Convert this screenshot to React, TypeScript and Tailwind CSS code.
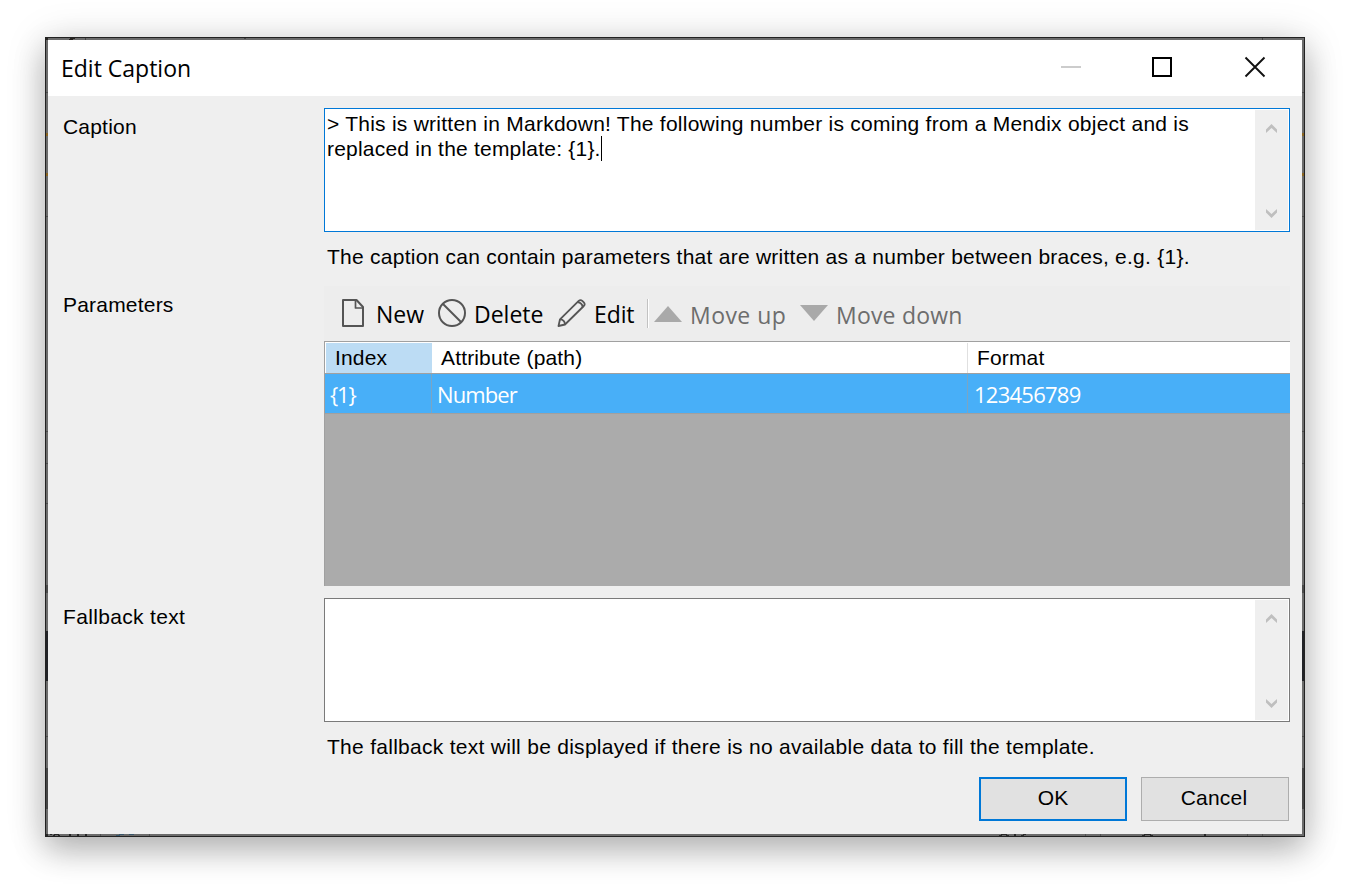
import type { ReactNode } from "react";

const ui = "font-['Open_Sans','Noto_Sans',sans-serif]";

function TopStrip() {
  return (
    <svg className="block h-[2px] w-full" viewBox="0 0 1258 2" shapeRendering="crispEdges">
      <rect width="1258" height="2" fill="#6b6b6b" />
      <path d="M0 0h2v2h-2zM24 0h5v1h-5zM23 1h4v1h-4z" fill="#25221f" />
      <path d="M39 0h1v2h-1zM198 0h2v1h-2zM1216 0h1v2h-1z" fill="#444" />
    </svg>
  );
}

function BottomStrip() {
  return (
    <svg className="block h-[2px] w-full" viewBox="0 0 1258 2" shapeRendering="crispEdges">
      <rect width="1258" height="2" fill="#6b6b6b" />
      <path d="M0 0h2v2h-2zM4 0h2v1h-2zM8 0h5v1h-5zM7 1h2v1h-2zM12 1h2v1h-2zM23 0h2v2h-2zM31 0h2v2h-2zM39 0h2v2h-2z" fill="#272727" />
      <path d="M73 0h5v1h-5zM83 0h5v1h-5zM70 1h4v1h-4z" fill="#38566b" />
      <path d="M54 0h1v2h-1zM103 0h1v2h-1zM1039 0h1v2h-1zM1054 0h1v2h-1zM1201 0h1v2h-1zM1216 0h1v2h-1z" fill="#505050" />
      <path d="M955 0h6v1h-6zM953 1h3v1h-3zM960 1h3v1h-3zM968 0h2v2h-2zM977 0h3v1h-3zM975 1h3v1h-3zM1098 0h7v1h-7zM1096 1h3v1h-3zM1104 1h3v1h-3zM1158 0h2v2h-2z" fill="#2a2a2a" />
    </svg>
  );
}

function SideStrip() {
  return (
    <svg className="block h-[794px] w-[2px] shrink-0" viewBox="0 0 2 794" shapeRendering="crispEdges">
      <rect width="2" height="794" fill="#6b6b6b" />
      <path d="M0 52h2v1h-2zM0 176h2v1h-2zM0 391h2v1h-2zM0 423h2v1h-2zM0 463h2v1h-2zM0 696h2v1h-2z" fill="#4d4d4d" />
      <path d="M0 93h2v3h-2zM0 133h2v3h-2z" fill="#8a6420" />
      <rect y="545" width="2" height="8" fill="#4a4a4a" />
      <rect y="591" width="2" height="50" fill="#222327" />
      <rect y="728" width="2" height="41" fill="#454545" />
    </svg>
  );
}

function Chevron({ down = false }: { down?: boolean }) {
  return (
    <svg className="block h-[9px] w-[11px]" viewBox="0 0 11 9">
      <path
        d={down ? "M0 0L5.5 5L11 0V3.6L5.5 9L0 3.6Z" : "M0 9L5.5 4L11 9V5.4L5.5 0L0 5.4Z"}
        fill="#bfbfbf"
      />
    </svg>
  );
}

function TextBox({ focused = false, children }: { focused?: boolean; children?: ReactNode }) {
  return (
    <div className={`flex h-[124px] w-[966px] border bg-white ${focused ? "border-[#0078d7]" : "border-[#7a7a7a]"}`}>
      <div className="grow pt-[2px] pl-[2px] leading-[25px] whitespace-nowrap">{children}</div>
      <div className="my-px mr-px flex w-[33px] flex-col items-center justify-between bg-[#efefef] pt-[14px] pb-[12px]">
        <Chevron />
        <Chevron down />
      </div>
    </div>
  );
}

export default function App() {
  return (
    <div className="h-[890px] w-[1350px] overflow-hidden bg-white pt-[37px] pl-[45px] font-['Liberation_Sans',Arial,sans-serif] text-[21px] text-black">
      <div className="h-[800px] w-[1260px] border border-[#222222] shadow-[0_14px_30px_rgba(0,0,0,0.23),0_3px_38px_rgba(0,0,0,0.15)]">
        <TopStrip />
        <div className="flex">
          <SideStrip />
          <div className="h-[794px] w-[1254px] bg-[#efefef]">
            <header className="flex h-[56px] items-start bg-white">
              <h1 className={`${ui} grow pt-[11px] pl-[13px] text-[23px] leading-[34px]`}>Edit Caption</h1>
              <svg className="h-[56px] w-[260px]" viewBox="0 0 260 56">
                <path d="M19 27h20" stroke="#cccccc" strokeWidth="2" />
                <rect x="111" y="18" width="18" height="18" fill="none" stroke="#000" strokeWidth="2" />
                <path d="M203.5 17.5l19 19M222.5 17.5l-19 19" stroke="#111" strokeWidth="1.9" />
              </svg>
            </header>

            <main className="pt-[12px]">
              <section className="flex h-[178px]">
                <div className="w-[276px] shrink-0 pt-[6px] pl-[15px] leading-[25px] tracking-[0.2px]">Caption</div>
                <div>
                  <TextBox focused>
                    <div className="tracking-[0.245px]">&gt; This is written in Markdown! The following number is coming from a Mendix object and is</div>
                    <div className="flex tracking-[0.21px]">
                      replaced in the template: {"{1}."}
                      <span className="h-[25px] w-px bg-black" />
                    </div>
                  </TextBox>
                  <p className="pt-[12px] pl-[3px] leading-[25px] tracking-[0.25px]">
                    The caption can contain parameters that are written as a number between braces, e.g. {"{1}."}
                  </p>
                </div>
              </section>

              <section className="flex h-[312px]">
                <div className="w-[276px] shrink-0 pt-[6px] pl-[15px] leading-[25px] tracking-[0.2px]">Parameters</div>
                <div className="w-[966px]">
                  <div className={`${ui} flex h-[55px] items-center bg-[#ededed] pl-[16px] text-[23px] leading-[34px] whitespace-nowrap`}>
                    <svg className="h-[30px] w-[24px] shrink-0" viewBox="0 0 24 30" fill="none" stroke="#555" strokeWidth="2" strokeLinejoin="round">
                      <path d="M3 1h13.5L23 8v19H3z" />
                      <path d="M15.5 1v8h7.5" strokeWidth="1.7" />
                    </svg>
                    <span className="ml-[12px] w-[62px] pt-px">New</span>
                    <svg className="h-[30px] w-[28px] shrink-0" viewBox="0 0 28 30" fill="none" stroke="#555" strokeWidth="2">
                      <circle cx="14" cy="14" r="13" />
                      <path d="M5 5l18 18" />
                    </svg>
                    <span className="ml-[8px] w-[83px] pt-px">Delete</span>
                    <svg className="h-[30px] w-[30px] shrink-0" viewBox="0 0 30 30" fill="none" stroke="#555" strokeWidth="1.8" strokeLinejoin="round">
                      <path d="M1.5 27L3 20.3L21.7 1.9Q23.5 .3 25.3 1.9L26.8 3.4Q28.5 5.2 26.8 7L8 25.5L1.5 27Z" />
                      <path d="M3 20.3Q7.8 20.5 8 25.5M20.5 3.2Q25 3.7 25.7 8" />
                    </svg>
                    <span className="ml-[7px] w-[53px] pt-px tracking-[-0.1px]">Edit</span>
                    <span className="h-[29px] w-px bg-[#c2c2c2]" />
                    <span className="h-[29px] w-px bg-white" />
                    <svg className="ml-[5px] h-[16px] w-[28px] shrink-0" viewBox="0 0 28 16"><path d="M0 16L14 0L28 16Z" fill="#a9a9a9" /></svg>
                    <span className="ml-[8px] w-[110px] pt-[2px] tracking-[0.45px] text-[#6d6d6d]">Move up</span>
                    <svg className="h-[16px] w-[28px] shrink-0 -translate-y-px" viewBox="0 0 28 16"><path d="M0 0H28L14 16Z" fill="#a9a9a9" /></svg>
                    <span className="ml-[8px] pt-[2px] tracking-[0.2px] text-[#6d6d6d]">Move down</span>
                  </div>
                  <div className="h-[245px] border-t border-l border-[#a0a0a0] bg-[#ababab]">
                    <div className="flex h-[32px] border-b border-[#a0a0a0] bg-white pt-px pl-px leading-[30px] tracking-[0.15px]">
                      <div className="w-[106px] bg-[#bcdcf4] pl-[9px]">Index</div>
                      <div className="w-[536px] border-r border-[#e0e0e0] pl-[9px]">Attribute (path)</div>
                      <div className="pl-[9px]">Format</div>
                    </div>
                    <div className={`${ui} flex h-[40px] border-b border-[#a0a0a0] bg-[#48aff8] text-[22px] leading-[40px] text-white`}>
                      <div className="w-[107px] border-r border-[#7aa5c4] pl-[5px] tracking-[-1.2px]">{"{1}"}</div>
                      <div className="w-[536px] border-r border-[#7aa5c4] pl-[5px] tracking-[-0.9px]">Number</div>
                      <div className="pl-[6px] tracking-[-0.75px]">123456789</div>
                    </div>
                  </div>
                </div>
              </section>

              <section className="flex h-[167px]">
                <div className="w-[276px] shrink-0 pt-[6px] pl-[15px] leading-[25px] tracking-[0.33px]">Fallback text</div>
                <div>
                  <TextBox />
                  <p className="pt-[12px] pl-[3px] leading-[25px] tracking-[0.28px]">
                    The fallback text will be displayed if there is no available data to fill the template.
                  </p>
                </div>
              </section>

              <footer className="flex justify-end gap-[14px] pt-[12px] pr-[13px] tracking-[0.2px]">
                <button className="h-[44px] w-[148px] border-2 border-[#0078d7] bg-[#e1e1e1] pb-[2px] leading-[38px]">OK</button>
                <button className="h-[44px] w-[148px] border border-[#adadad] bg-[#e1e1e1] pr-[2px] pb-[2px] leading-[40px]">Cancel</button>
              </footer>
            </main>
          </div>
          <SideStrip />
        </div>
        <BottomStrip />
      </div>
    </div>
  );
}
